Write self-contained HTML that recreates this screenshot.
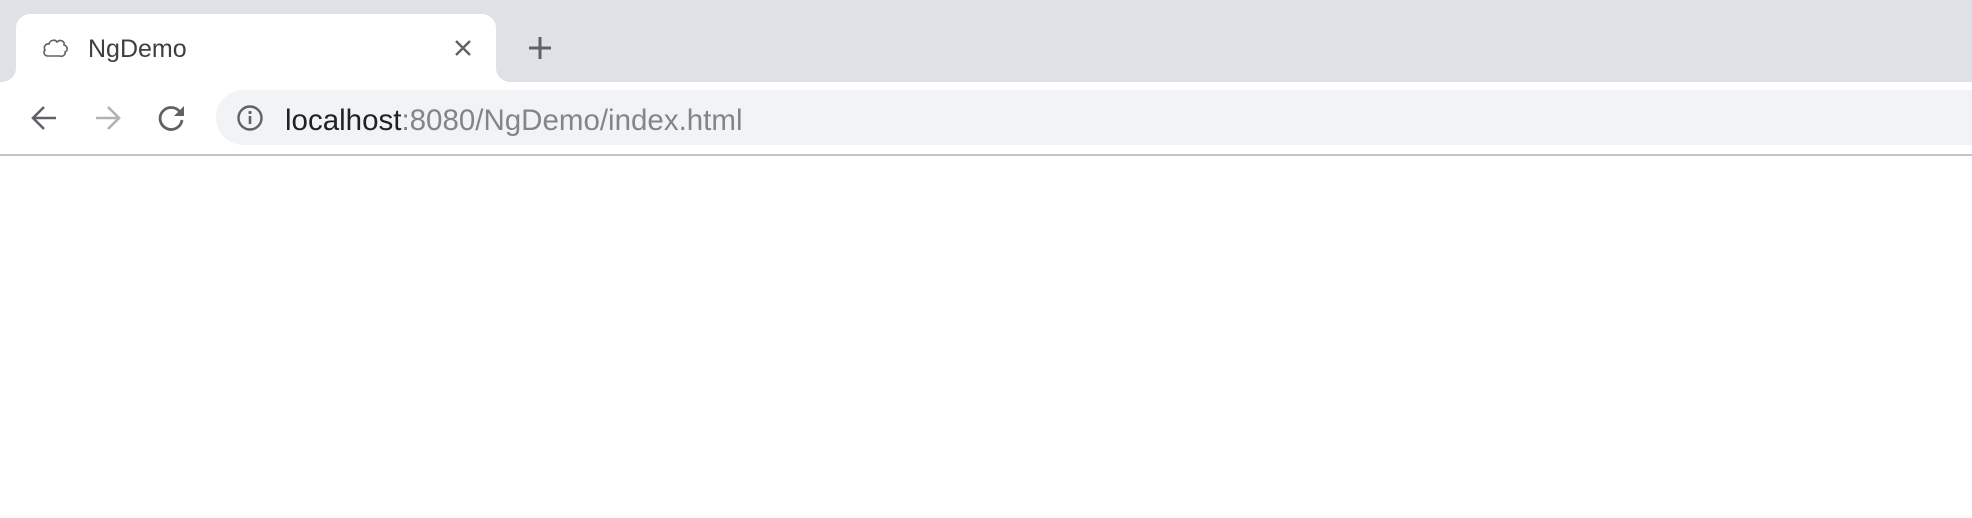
<!DOCTYPE html>
<html><head><meta charset="utf-8"><style>
html,body{margin:0;padding:0;width:1972px;height:518px;background:#fff;overflow:hidden;font-family:"Liberation Sans",Arial,sans-serif}
.strip{position:absolute;left:0;top:0;width:1972px;height:82px;background:#dee1e6}
.tab{position:absolute;left:16px;top:14px;width:480px;height:80px;background:#fff;border-radius:14px 14px 0 0}
.tabl{position:absolute;left:0;top:68px;width:16px;height:14px;background:#fff}
.tabl:after{content:"";position:absolute;left:0;top:0;width:16px;height:14px;background:#dee1e6;border-bottom-right-radius:14px}
.tabr{position:absolute;left:496px;top:68px;width:16px;height:14px;background:#fff}
.tabr:after{content:"";position:absolute;left:0;top:0;width:16px;height:14px;background:#dee1e6;border-bottom-left-radius:14px}
.toolbar{position:absolute;left:0;top:82px;width:1972px;height:73px;background:#fff}
.line{position:absolute;left:0;top:154px;width:1972px;height:2px;background:#c4c4c4}
.omni{position:absolute;left:216px;top:90px;width:1800px;height:55px;background:#f1f3f4;border-radius:28px}
.title{position:absolute;left:88px;top:35px;font-size:25px;color:#3c4043}
.url{position:absolute;left:285px;top:104px;font-size:29.5px;color:#80868b;white-space:nowrap}
.url b{font-weight:normal;color:#202124}
svg{position:absolute}
</style></head><body>
<div class="strip"></div>
<div class="tabl"></div><div class="tabr"></div>
<div class="tab"></div>
<svg style="left:42px;top:37px" width="28" height="22" viewBox="0 0 28 22"><path d="M6 19 C2 19 1 15 3 13 C1 10 4 6 7 7 C8 3 13 2 15 5 C18 2 23 4 22 8 C26 9 26 14 23 15 C24 18 20 20 18 19 Z" fill="#fff" stroke="#5f6368" stroke-width="1.6"/></svg>
<div class="title">NgDemo</div>
<svg style="left:452px;top:37px" width="22" height="22" viewBox="0 0 22 22"><path d="M4 4L18 18M18 4L4 18" stroke="#5f6368" stroke-width="2.4"/></svg>
<svg style="left:527px;top:35px" width="26" height="26" viewBox="0 0 26 26"><path d="M13 2V24M2 13H24" stroke="#5f6368" stroke-width="3"/></svg>
<div class="toolbar"></div>
<svg style="left:30px;top:104px" width="28" height="28" viewBox="0 0 28 28"><path d="M26 14H4M14 3L3 14L14 25" fill="none" stroke="#5f6368" stroke-width="2.6"/></svg>
<svg style="left:94px;top:104px" width="28" height="28" viewBox="0 0 28 28"><path d="M2 14H24M14 3L25 14L14 25" fill="none" stroke="#b0b2b5" stroke-width="2.6"/></svg>
<svg style="left:157px;top:103px" width="30" height="30" viewBox="0 0 30 30"><path d="M23 9A11 11 0 1 0 25 17" fill="none" stroke="#5f6368" stroke-width="2.8"/><path d="M27 3V13H17Z" fill="#5f6368"/></svg>
<div class="omni"></div>
<svg style="left:236px;top:104px" width="28" height="28" viewBox="0 0 28 28"><circle cx="14" cy="14" r="11.5" fill="none" stroke="#5f6368" stroke-width="2.4"/><path d="M14 12V20" stroke="#5f6368" stroke-width="2.6"/><circle cx="14" cy="8.5" r="1.6" fill="#5f6368"/></svg>
<div class="url"><b>localhost</b>:8080/NgDemo/index.html</div>
<div class="line"></div>
</body></html>
